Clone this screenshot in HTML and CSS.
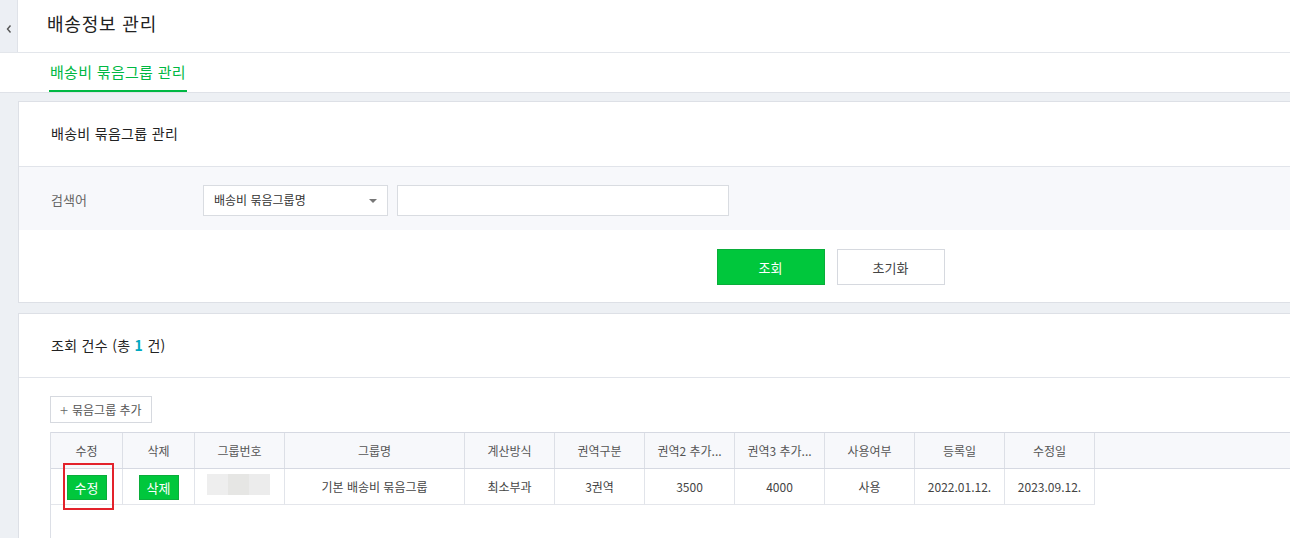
FILE: index.html
```html
<!DOCTYPE html>
<html lang="ko">
<head>
<meta charset="utf-8">
<title>배송정보 관리</title>
<link rel="stylesheet" href="styles.css">
</head>
<body>
<div class="page">
  <header class="topbar">
    <div class="side-toggle"><svg width="8" height="10" viewBox="0 0 8 10"><path d="M5.5 1.5 L2.5 5 L5.5 8.5" fill="none" stroke="#555" stroke-width="1.4"/></svg></div>
    <h1 class="page-title">배송정보 관리</h1>
  </header>
  <nav class="tabs">
    <a class="tab active">배송비 묶음그룹 관리</a>
  </nav>
  <main class="content">
    <section class="panel">
      <div class="panel-head">배송비 묶음그룹 관리</div>
      <div class="search-row">
        <span class="search-label">검색어</span>
        <div class="select"><span>배송비 묶음그룹명</span><i class="caret"></i></div>
        <div class="text-input"></div>
      </div>
      <div class="actions">
        <button class="btn btn-primary">조회</button>
        <button class="btn btn-default">초기화</button>
      </div>
    </section>
    <section class="panel panel-result">
      <div class="panel-head">조회 건수 (총 <b class="count">1</b> 건)</div>
      <div class="result-body">
        <button class="btn-add"><span class="plus">+</span> 묶음그룹 추가</button>
        <div class="grid">
          <div class="grid-row grid-header">
            <div class="cell w72">수정</div>
            <div class="cell w72">삭제</div>
            <div class="cell w90">그룹번호</div>
            <div class="cell w180">그룹명</div>
            <div class="cell w90">계산방식</div>
            <div class="cell w90">권역구분</div>
            <div class="cell w90">권역2 추가...</div>
            <div class="cell w90">권역3 추가...</div>
            <div class="cell w90">사용여부</div>
            <div class="cell w90">등록일</div>
            <div class="cell w90">수정일</div>
            <div class="cell filler"></div>
          </div>
          <div class="grid-row grid-data">
            <div class="cell w72 highlight-cell"><button class="btn-sm">수정</button><span class="mark"></span></div>
            <div class="cell w72"><button class="btn-sm">삭제</button></div>
            <div class="cell w90"><span class="blur"><i></i><i></i><i></i></span></div>
            <div class="cell w180">기본 배송비 묶음그룹</div>
            <div class="cell w90">최소부과</div>
            <div class="cell w90">3권역</div>
            <div class="cell w90">3500</div>
            <div class="cell w90">4000</div>
            <div class="cell w90">사용</div>
            <div class="cell w90">2022.01.12.</div>
            <div class="cell w90">2023.09.12.</div>
          </div>
        </div>
      </div>
    </section>
  </main>
</div>
</body>
</html>
```
FILE: styles.css
```css
* { box-sizing: border-box; }
html, body { margin: 0; padding: 0; }
body {
  width: 1290px;
  height: 538px;
  overflow: hidden;
  background: #edf0f4;
  font-family: "Noto Sans CJK KR", "Noto Sans", sans-serif;
  color: #333;
}
.page { width: 1290px; overflow: hidden; }

.topbar {
  display: flex;
  height: 53px;
  background: #fff;
  border-bottom: 1px solid #e3e6eb;
}
.side-toggle {
  width: 18px;
  background: #eceff4;
  border-right: 1px solid #dfe2e8;
  display: flex;
  align-items: center;
  justify-content: center;
  padding-top: 6px;
}
.page-title {
  margin: 0 0 0 29px;
  font-size: 18px;
  font-weight: 400;
  line-height: 46px;
  color: #222;
  letter-spacing: 0.8px;
}

.tabs {
  height: 40px;
  background: #fff;
  border-bottom: 1px solid #dfe2e8;
  padding-left: 49px;
  display: flex;
}
.tab {
  font-size: 15px;
  line-height: 37px;
  padding: 0 1px;
  letter-spacing: 0.3px;
  color: #00b843;
  border-bottom: 2px solid #00b843;
  height: 39px;
}

.content {
  padding: 8px 0 0 18px;
}
.panel {
  width: 1624px;
  background: #fff;
  border: 1px solid #dde0e6;
  border-right: none;
}
.panel-head {
  height: 65px;
  padding-left: 32px;
  font-size: 14px;
  line-height: 63px;
  color: #222;
  letter-spacing: 0.3px;
  border-bottom: 1px solid #e1e4ea;
}
.search-row {
  height: 63px;
  background: #f7f8fb;
  display: flex;
  align-items: center;
  padding-left: 32px;
  padding-top: 3px;
}
.search-label {
  width: 152px;
  font-size: 13px;
  color: #666;
  padding-bottom: 2px;
}
.select {
  width: 185px;
  height: 31px;
  border: 1px solid #d9dce1;
  background: #fff;
  display: flex;
  align-items: center;
  justify-content: space-between;
  padding: 0 10px 0 10px;
  font-size: 12px;
  color: #333;
}
.select span { padding-bottom: 1px; }
.caret {
  width: 0; height: 0;
  border-left: 4px solid transparent;
  border-right: 4px solid transparent;
  border-top: 4px solid #777;
  margin-top: 1px;
}
.text-input {
  width: 332px;
  height: 31px;
  margin-left: 9px;
  border: 1px solid #d9dce1;
  background: #fff;
}
.actions {
  display: flex;
  justify-content: center;
  gap: 12px;
  padding: 19px 0 17px;
}
.btn {
  width: 108px;
  height: 36px;
  font-family: inherit;
  font-size: 13px;
  cursor: pointer;
}
.btn-primary {
  background: #00c73c;
  border: 1px solid #0aad3a;
  color: #fff;
}
.btn-default {
  background: #fff;
  border: 1px solid #d6d9df;
  color: #444;
}

.panel-result {
  margin-top: 10px;
  height: 240px;
  border-bottom: none;
}
.panel-result .panel-head { height: 64px; line-height: 63px; }
.count { color: #00a8c0; font-weight: 700; }
.result-body {
  padding: 18px 0 0 31px;
}
.btn-add {
  height: 27px;
  padding: 0 9px;
  background: #fff;
  border: 1px solid #d6d9df;
  font-family: inherit;
  font-size: 12px;
  color: #555;
  display: flex;
  align-items: center;
  gap: 4px;
}
.plus { font-size: 15px; font-weight: 300; color: #666; line-height: 1; margin-top: -1px; }

.grid {
  margin-top: 9px;
  border-left: 1px solid #dcdfe6;
  min-height: 120px;
}
.grid-row { display: flex; }
.grid-header {
  background: #f7f8fb;
  border-top: 1px solid #d6d9e2;
  border-bottom: 1px solid #d6d9e2;
  height: 37px;
}
.grid-data { height: 36px; }
.cell {
  flex: none;
  display: flex;
  align-items: center;
  justify-content: center;
  font-size: 12px;
  color: #444;
  border-right: 1px solid #e1e4ea;
  white-space: nowrap;
}
.grid-header .cell { color: #555; border-right-color: #dcdfe6; }
.grid-data .cell { border-bottom: 1px solid #e4e6eb; }
.w72 { width: 72px; }
.w90 { width: 90px; }
.w180 { width: 180px; }
.filler { flex: 1; border-right: none; }

.highlight-cell { position: relative; }
.btn-sm {
  width: 40px;
  height: 25px;
  background: #00c73c;
  border: 1px solid #0aad3a;
  color: #fff;
  font-family: inherit;
  font-size: 13px;
  padding: 0;
  margin-top: 2px;
}
.mark {
  position: absolute;
  left: 12px;
  top: -6px;
  width: 51px;
  height: 47px;
  border: 2px solid #e3222b;
}
.blur {
  display: flex;
  height: 21px;
  margin-top: -4px;
  margin-left: -2px;
}
.blur i { width: 21px; height: 21px; background: #eeeeee; }
.blur i:nth-child(2) { background: #e6e6e4; }
.blur i:nth-child(3) { background: #ececec; }
```
